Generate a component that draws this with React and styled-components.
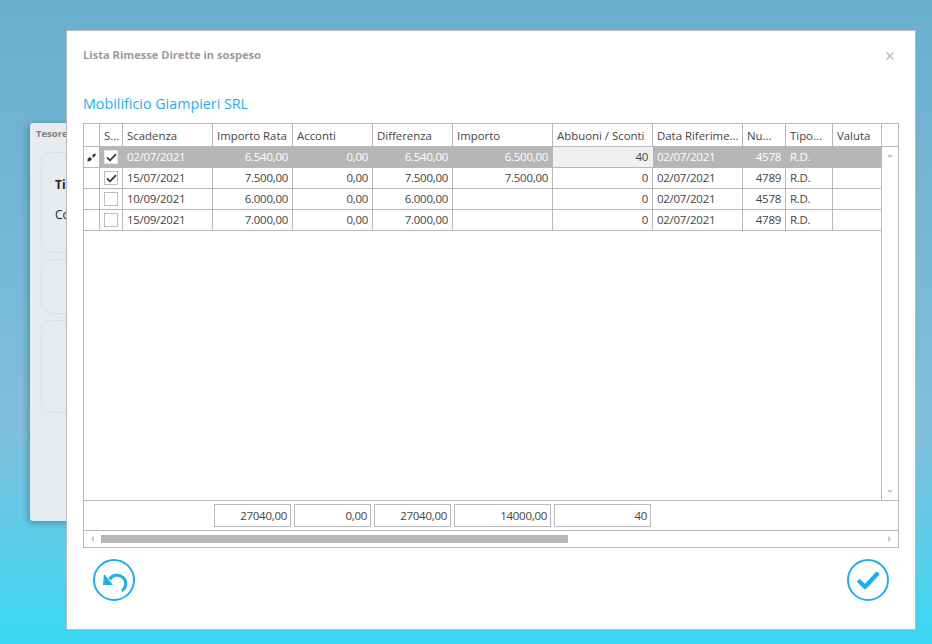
import React from "react";
import styled, { createGlobalStyle } from "styled-components";

const GlobalStyle = createGlobalStyle`
  html, body {
    margin: 0;
    height: 100%;
  }
  body {
    font-family: "Open Sans", "Noto Sans", "Liberation Sans", sans-serif;
    overflow: hidden;
  }
`;

const columns = [
  { title: "", width: 16 },
  { title: "S...", width: 23 },
  { title: "Scadenza", width: 90 },
  { title: "Importo Rata", width: 80 },
  { title: "Acconti", width: 80 },
  { title: "Differenza", width: 80 },
  { title: "Importo", width: 100 },
  { title: "Abbuoni / Sconti", width: 100 },
  { title: "Data Riferime...", width: 90 },
  { title: "Nu...", width: 43 },
  { title: "Tipo...", width: 47 },
  { title: "Valuta", width: 49 },
];

const rows = [
  { checked: true, scadenza: "02/07/2021", rata: "6.540,00", acconti: "0,00", diff: "6.540,00", importo: "6.500,00", abbuoni: "40", num: "4578", selected: true },
  { checked: true, scadenza: "15/07/2021", rata: "7.500,00", acconti: "0,00", diff: "7.500,00", importo: "7.500,00", abbuoni: "0", num: "4789" },
  { checked: false, scadenza: "10/09/2021", rata: "6.000,00", acconti: "0,00", diff: "6.000,00", importo: "", abbuoni: "0", num: "4578" },
  { checked: false, scadenza: "15/09/2021", rata: "7.000,00", acconti: "0,00", diff: "7.000,00", importo: "", abbuoni: "0", num: "4789" },
];

const totals = [
  { value: "27040,00", width: 77 },
  { value: "0,00", width: 77 },
  { value: "27040,00", width: 77 },
  { value: "14000,00", width: 97 },
  { value: "40", width: 97 },
];

const headerTemplate = columns.map((c) => `${c.width}px`).join(" ") + " 1fr";
const rowTemplate = columns.slice(0, -1).map((c) => `${c.width}px`).join(" ") + " 1fr";

const Desktop = styled.div`
  position: relative;
  width: 932px;
  height: 644px;
  overflow: hidden;
  background: linear-gradient(180deg, #69afcd 0%, #7fc0dd 68%, #38d8f4 100%);
`;

const BackWindow = styled.div`
  position: absolute;
  left: 30px;
  top: 123px;
  width: 300px;
  height: 398px;
  box-sizing: border-box;
  padding: 3px 10px 0 11px;
  background: #e8ebee;
  border-radius: 3px;
  box-shadow: -2px 2px 7px rgba(40, 80, 100, 0.45);
`;

const BackTitle = styled.div`
  font-size: 9.5px;
  font-weight: 700;
  color: #7d8186;
  height: 26px;
  line-height: 15px;
  margin-left: -5px;
`;

const BackPanel = styled.div`
  box-sizing: border-box;
  height: ${(p) => p.$height}px;
  margin-bottom: 6px;
  padding: 24px 13px 0;
  border: 1px solid #dcdfe2;
  border-radius: 10px;
  font-size: 12px;
  color: #222;
`;

const BackLabel = styled.div`
  font-weight: ${(p) => (p.$bold ? 700 : 400)};
  margin-bottom: 14px;
  line-height: 16px;
`;

const Modal = styled.div`
  position: absolute;
  left: 66px;
  top: 30px;
  width: 850px;
  height: 600px;
  box-sizing: border-box;
  padding: 0 16px;
  display: flex;
  flex-direction: column;
  background: #fff;
  border: 1px solid #b8b8b8;
`;

const ModalHeader = styled.div`
  display: flex;
  justify-content: space-between;
  align-items: center;
  height: 46px;
`;

const ModalTitle = styled.div`
  font-size: 11.1px;
  font-weight: 700;
  color: #9c9c9c;
`;

const CloseIcon = styled.svg`
  width: 8px;
  height: 8px;
  margin: 4px 5px 0 0;
  stroke: #b4b4b4;
  stroke-width: 1.3;
`;

const Customer = styled.div`
  height: 46px;
  padding-top: 18px;
  box-sizing: border-box;
  font-size: 14.3px;
  line-height: 18px;
  color: #1eaef0;
`;

const Table = styled.div`
  width: 816px;
  height: 425px;
  box-sizing: border-box;
  display: flex;
  flex-direction: column;
  border: 1px solid #b8b8b8;
  font-size: 11.5px;
  letter-spacing: -0.28px;
  color: #444;
`;

const HeaderRow = styled.div`
  display: grid;
  grid-template-columns: ${headerTemplate};
  height: 23px;
  flex: none;
  box-sizing: border-box;
  border-bottom: 1px solid #b8b8b8;
`;

const HeaderCell = styled.div`
  box-sizing: border-box;
  padding-left: 4px;
  font-size: 11.4px;
  letter-spacing: 0;
  line-height: 23px;
  white-space: nowrap;
  overflow: hidden;
  border-right: 1px solid #b8b8b8;

  &:last-child {
    border-right: 0;
  }
`;

const Body = styled.div`
  flex: 1;
  min-height: 0;
  display: flex;
  border-bottom: 1px solid #b8b8b8;
`;

const Rows = styled.div`
  flex: 1;
`;

const Row = styled.div`
  display: grid;
  grid-template-columns: ${rowTemplate};
  height: 21px;
  box-sizing: border-box;
  border-bottom: 1px solid #b8b8b8;
  background: ${(p) => (p.$selected ? "#b6b6b6" : "transparent")};
  color: ${(p) => (p.$selected ? "#fff" : "#444")};
`;

const Cell = styled.div`
  box-sizing: border-box;
  padding: 0 4px;
  line-height: 20px;
  white-space: nowrap;
  text-align: ${(p) => (p.$right ? "right" : "left")};
  background: ${(p) => (p.$editing ? "#f0f0f0" : "transparent")};
  color: ${(p) => (p.$editing ? "#444" : "inherit")};
  border-right: 1px solid ${(p) => (p.$selected ? "transparent" : "#b8b8b8")};

  &:last-child {
    border-right: 0;
  }
`;

const IndicatorCell = styled.div`
  display: flex;
  align-items: center;
  justify-content: center;
  background: #fff;
  border-right: 1px solid #b8b8b8;
`;

const CheckCell = styled(Cell)`
  display: flex;
  align-items: center;
  justify-content: center;
  padding: 0;
`;

const CheckBox = styled.div`
  width: 14px;
  height: 14px;
  box-sizing: border-box;
  display: flex;
  align-items: center;
  justify-content: center;
  background: #fff;
  border: 1px solid ${(p) => (p.$selected ? "#e4e4e4" : "#bdbdbd")};
`;

const VerticalScroll = styled.div`
  width: 17px;
  flex: none;
  display: flex;
  flex-direction: column;
  justify-content: space-between;
  align-items: center;
  padding: 7px 0;
  box-sizing: border-box;
  border-left: 1px solid #b8b8b8;
`;

const Arrow = styled.div`
  width: 0;
  height: 0;
  border-style: solid;
  border-color: transparent;
  border-width: 3px;
  ${(p) => p.$dir === "up" && "border-top-width: 0; border-bottom-color: #c4c4c4;"}
  ${(p) => p.$dir === "down" && "border-bottom-width: 0; border-top-color: #c4c4c4;"}
  ${(p) => p.$dir === "left" && "border-left-width: 0; border-right-color: #c4c4c4;"}
  ${(p) => p.$dir === "right" && "border-right-width: 0; border-left-color: #c4c4c4;"}
`;

const Totals = styled.div`
  height: 30px;
  flex: none;
  box-sizing: border-box;
  display: flex;
  gap: 3px;
  padding: 3px 0 0 130px;
  border-bottom: 1px solid #b8b8b8;
`;

const TotalBox = styled.div`
  width: ${(p) => p.$width}px;
  height: 23px;
  box-sizing: border-box;
  border: 1px solid #b8b8b8;
  padding: 0 3px;
  text-align: right;
  line-height: 22px;
`;

const HorizontalScroll = styled.div`
  height: 16px;
  flex: none;
  display: flex;
  align-items: center;
  padding: 0 7px;
`;

const Thumb = styled.div`
  width: 467px;
  height: 8px;
  margin-left: 7px;
  margin-right: auto;
  background: #b6b6b6;
`;

const Actions = styled.div`
  display: flex;
  justify-content: space-between;
  width: 796px;
  padding: 11px 10px 0;
`;

const RoundButton = styled.button`
  width: 42px;
  height: 42px;
  padding: 0;
  display: flex;
  align-items: center;
  justify-content: center;
  background: #fff;
  border: 2px solid #1eaef0;
  border-radius: 50%;
`;

function PencilIcon() {
  return (
    <svg width="9" height="9" viewBox="0 0 9 9">
      <path d="M0.4 8.6 L0.8 5.6 L3 4 L5 6 L3.2 8 Z" fill="#333" />
      <path d="M5 3.2 L6.2 1.2 L8.6 0.5 L8.6 2.6 L6.4 4.4 Z" fill="#333" />
    </svg>
  );
}

function TickIcon() {
  return (
    <svg width="11" height="9" viewBox="0 0 12 10">
      <path d="M1 4.8 L4.3 8.2 L11 1.2" fill="none" stroke="#3c3c3c" strokeWidth="2" />
    </svg>
  );
}

function UndoIcon() {
  return (
    <svg width="26" height="26" viewBox="0 0 26 26">
      <path d="M8.5 12.5 A8.7 8.7 0 1 1 21 24" fill="none" stroke="#1eaef0" strokeWidth="3" />
      <path d="M3 7 L2 18 L12 18 Z" fill="#1eaef0" />
    </svg>
  );
}

function ConfirmIcon() {
  return (
    <svg width="26" height="22" viewBox="0 0 26 22">
      <path d="M4.5 12.5 L10 18 L22 5" fill="none" stroke="#1eaef0" strokeWidth="4.4" strokeLinecap="round" strokeLinejoin="round" />
    </svg>
  );
}

function DataRow({ row }) {
  const sel = row.selected;
  return (
    <Row $selected={sel}>
      <IndicatorCell>{sel && <PencilIcon />}</IndicatorCell>
      <CheckCell $selected={sel}>
        <CheckBox $selected={sel}>{row.checked && <TickIcon />}</CheckBox>
      </CheckCell>
      <Cell $selected={sel}>{row.scadenza}</Cell>
      <Cell $selected={sel} $right>{row.rata}</Cell>
      <Cell $selected={sel} $right>{row.acconti}</Cell>
      <Cell $selected={sel} $right>{row.diff}</Cell>
      <Cell $selected={sel} $right>{row.importo}</Cell>
      <Cell $selected={sel} $right $editing={sel}>{row.abbuoni}</Cell>
      <Cell $selected={sel}>02/07/2021</Cell>
      <Cell $selected={sel} $right>{row.num}</Cell>
      <Cell $selected={sel}>R.D.</Cell>
      <Cell $selected={sel} />
    </Row>
  );
}

export default function App() {
  return (
    <Desktop>
      <GlobalStyle />
      <BackWindow>
        <BackTitle>Tesoreria</BackTitle>
        <BackPanel $height={101}>
          <BackLabel $bold>Tipo</BackLabel>
          <BackLabel>Conto</BackLabel>
        </BackPanel>
        <BackPanel $height={55} />
        <BackPanel $height={93} />
      </BackWindow>
      <Modal>
        <ModalHeader>
          <ModalTitle>Lista Rimesse Dirette in sospeso</ModalTitle>
          <CloseIcon viewBox="0 0 8 8">
            <path d="M0.5 0.5 L7.5 7.5 M7.5 0.5 L0.5 7.5" />
          </CloseIcon>
        </ModalHeader>
        <Customer>Mobilificio Giampieri SRL</Customer>
        <Table>
          <HeaderRow>
            {columns.map((c) => (
              <HeaderCell key={c.title}>{c.title}</HeaderCell>
            ))}
            <HeaderCell />
          </HeaderRow>
          <Body>
            <Rows>
              {rows.map((r) => (
                <DataRow key={r.scadenza} row={r} />
              ))}
            </Rows>
            <VerticalScroll>
              <Arrow $dir="up" />
              <Arrow $dir="down" />
            </VerticalScroll>
          </Body>
          <Totals>
            {totals.map((t, i) => (
              <TotalBox key={i} $width={t.width}>{t.value}</TotalBox>
            ))}
          </Totals>
          <HorizontalScroll>
            <Arrow $dir="left" />
            <Thumb />
            <Arrow $dir="right" />
          </HorizontalScroll>
        </Table>
        <Actions>
          <RoundButton aria-label="Annulla"><UndoIcon /></RoundButton>
          <RoundButton aria-label="Conferma"><ConfirmIcon /></RoundButton>
        </Actions>
      </Modal>
    </Desktop>
  );
}
